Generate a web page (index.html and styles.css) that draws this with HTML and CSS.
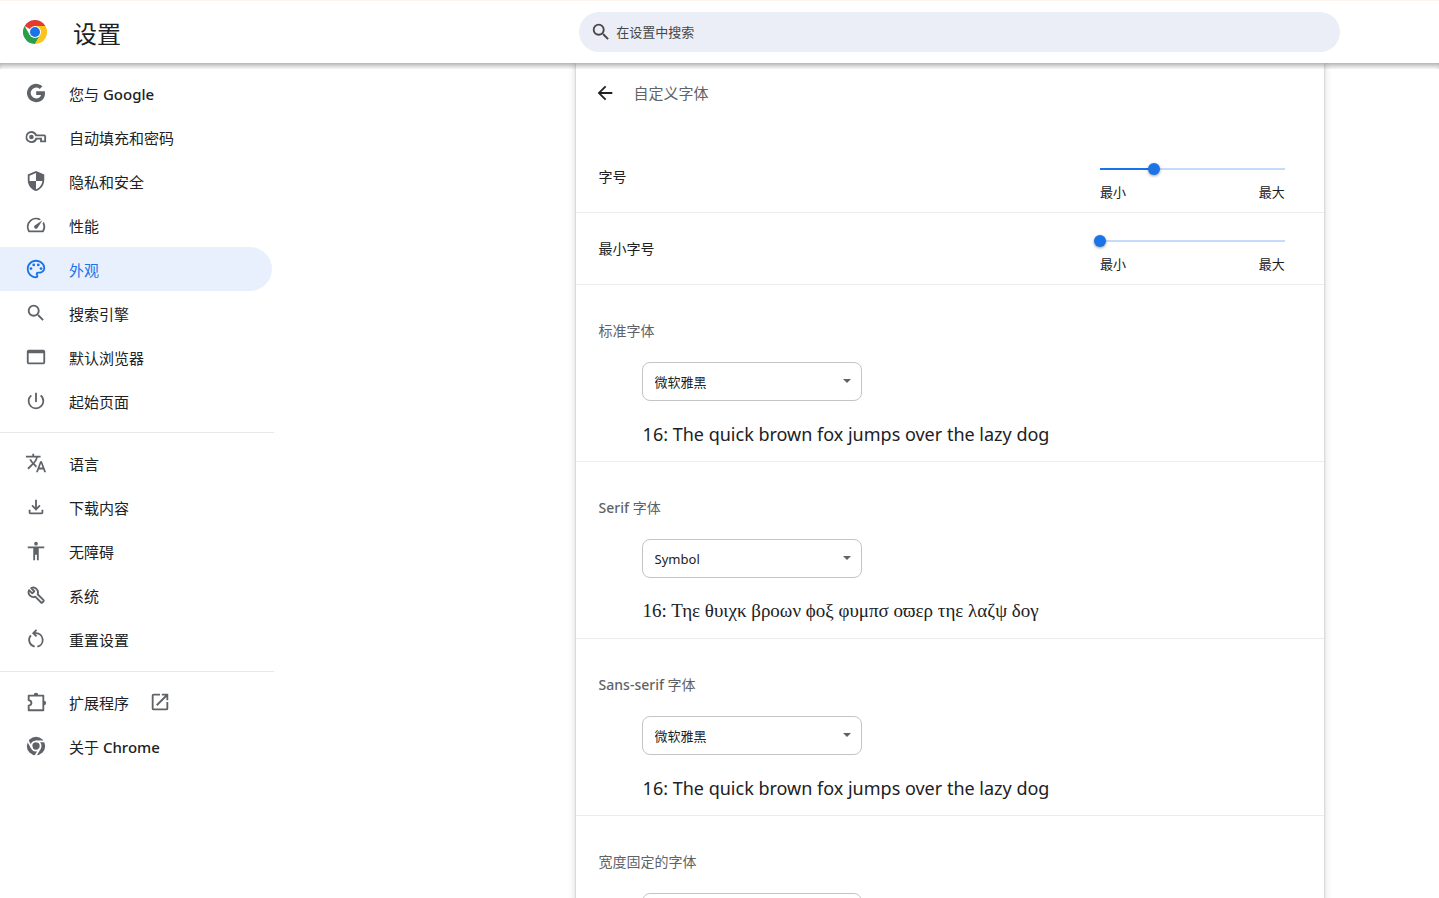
FILE: index.html
```html
<!DOCTYPE html>
<html lang="zh-CN">
<head>
<meta charset="utf-8">
<title>设置 - 自定义字体</title>
<meta name="viewport" content="width=device-width, initial-scale=1">
<link rel="stylesheet" href="styles.css">
</head>
<body>
<div class="app">
  <header class="toolbar">
    <div class="brand">
      <svg class="logo" viewBox="0 0 48 48" aria-hidden="true">
        <path fill="#e33b2e" d="M24 24 3.2 12A24 24 0 0 1 44.8 12L44.8 12.5 24 12.5Z"/>
        <path fill="#2a9d4a" d="M3.2 12A24 24 0 0 0 24 48L34.4 30 24 24 13.6 30Z"/>
        <path fill="#fcc31e" d="M24 12H44.8A24 24 0 0 1 24 48L34.4 30Z"/>
        <circle cx="24" cy="24" r="12" fill="#fff"/>
        <circle cx="24" cy="24" r="10" fill="#1a73e8"/>
      </svg>
      <h1 class="brand-name">设置</h1>
    </div>
    <label class="search">
      <svg class="search-icon" viewBox="0 0 24 24" aria-hidden="true"><path d="M15.5 14h-.79l-.28-.27A6.471 6.471 0 0 0 16 9.5 6.5 6.5 0 1 0 9.5 16c1.61 0 3.09-.59 4.23-1.57l.27.28v.79l5 4.99L20.49 19l-4.99-5zm-6 0C7.01 14 5 11.99 5 9.5S7.01 5 9.5 5 14 7.01 14 9.5 11.99 14 9.5 14z"/></svg>
      <input class="search-input" type="search" placeholder="在设置中搜索" aria-label="在设置中搜索">
    </label>
  </header>

  <div class="page">
    <nav class="menu" aria-label="设置">
      <a class="item" href="#people"><svg class="icon" viewBox="0 0 24 24"><path d="M21.600 10.2H12.2v4h5.300c-.6 2.200-2.500 3.700-5.300 3.700a5.900 5.900 0 1 1 3.900-10.300l2.900-2.900A10 10 0 1 0 12.200 22c5.700 0 9.600-4 9.600-9.800 0-.7-.1-1.400-.2-2z"/></svg><span>您与 <b>Google</b></span></a>
      <a class="item" href="#autofill"><svg class="icon" viewBox="0 0 24 24"><path fill-rule="evenodd" d="M7 5.500c2.600 0 4.800 1.500 5.800 3.700H21.500l1.500 1.500v7h-6.500v-3h-3.400A6.500 6.500 0 1 1 7 5.500zm0 2a4.500 4.500 0 1 0 4.300 5.900l.2-.7h7v3H21v-4.500H11.500l-.3-.7A4.500 4.500 0 0 0 7 7.500zM7 9.500a2.500 2.500 0 1 1 0 5 2.500 2.500 0 0 1 0-5z"/></svg><span>自动填充和密码</span></a>
      <a class="item" href="#privacy"><svg class="icon" viewBox="0 0 24 24"><path d="M12 1 3 5v6c0 5.550 3.840 10.740 9 12 5.160-1.260 9-6.450 9-12V5l-9-4zm0 10.990h7c-.53 4.120-3.280 7.790-7 8.940V12H5V6.300l7-3.110v8.800z"/></svg><span>隐私和安全</span></a>
      <a class="item" href="#performance"><svg class="icon" viewBox="0 0 24 24"><path d="m20.380 8.570-1.230 1.850a8 8 0 0 1-.22 7.580H5.070A8 8 0 0 1 15.580 6.850l1.850-1.230A10 10 0 0 0 3.350 19a2 2 0 0 0 1.720 1h13.850a2 2 0 0 0 1.740-1 10 10 0 0 0-.27-10.440zm-9.790 6.840a2 2 0 0 0 2.830 0l5.660-8.490-8.490 5.660a2 2 0 0 0 0 2.830z"/></svg><span>性能</span></a>
      <a class="item item-active" href="#appearance" aria-current="page"><svg class="icon" viewBox="0 0 24 24"><path d="M12 22C6.490 22 2 17.510 2 12S6.490 2 12 2s10 4.040 10 9c0 3.310-2.690 6-6 6h-1.770c-.28 0-.5.220-.5.500 0 .12.050.23.130.33.410.47.640 1.060.640 1.670A2.500 2.500 0 0 1 12 22zm0-18c-4.410 0-8 3.590-8 8s3.590 8 8 8c.28 0 .5-.22.5-.5a.540.540 0 0 0-.14-.35c-.41-.46-.63-1.050-.63-1.650a2.500 2.500 0 0 1 2.500-2.500H16c2.210 0 4-1.790 4-4 0-3.860-3.590-7-8-7z"/><circle cx="6.500" cy="11.500" r="1.500"/><circle cx="9.500" cy="7.500" r="1.500"/><circle cx="14.500" cy="7.500" r="1.500"/><circle cx="17.500" cy="11.500" r="1.500"/></svg><span>外观</span></a>
      <a class="item" href="#search"><svg class="icon" viewBox="0 0 24 24"><path d="M15.500 14h-.79l-.28-.27A6.471 6.471 0 0 0 16 9.500 6.500 6.500 0 1 0 9.500 16c1.610 0 3.090-.59 4.230-1.570l.27.28v.79l5 4.990L20.490 19l-4.990-5zm-6 0C7.010 14 5 11.990 5 9.500S7.010 5 9.500 5 14 7.010 14 9.500 11.990 14 9.500 14z"/></svg><span>搜索引擎</span></a>
      <a class="item" href="#default-browser"><svg class="icon" viewBox="0 0 24 24"><path d="M20 4H4a2 2 0 0 0-2 2v12a2 2 0 0 0 2 2h16a2 2 0 0 0 2-2V6a2 2 0 0 0-2-2zm0 14H4V8h16v10z"/></svg><span>默认浏览器</span></a>
      <a class="item" href="#on-startup"><svg class="icon" viewBox="0 0 24 24"><path d="M13 3h-2v10h2V3zm4.830 2.170-1.420 1.420A6.920 6.920 0 0 1 19 12c0 3.870-3.130 7-7 7A6.995 6.995 0 0 1 7.580 6.580L6.170 5.170A8.932 8.932 0 0 0 3 12a9 9 0 0 0 18 0c0-2.740-1.230-5.180-3.170-6.830z"/></svg><span>起始页面</span></a>
      <hr class="divider">
      <a class="item" href="#languages"><svg class="icon" viewBox="0 0 24 24"><path d="m12.870 15.070-2.540-2.510.03-.03A17.520 17.520 0 0 0 14.070 6H17V4h-7V2H8v2H1v1.990h11.170C11.500 7.920 10.440 9.750 9 11.350 8.070 10.320 7.300 9.190 6.690 8h-2c.73 1.630 1.730 3.170 2.980 4.560l-5.090 5.020L4 19l5-5 3.110 3.110.76-2.040zM18.500 10h-2L12 22h2l1.120-3h4.750L21 22h2l-4.500-12zm-2.620 7 1.620-4.330L19.120 17h-3.240z"/></svg><span>语言</span></a>
      <a class="item" href="#downloads"><svg class="icon" viewBox="0 0 24 24"><path d="m12 16-5-5 1.400-1.450 2.600 2.600V4h2v8.150l2.600-2.600L17 11l-5 5zm-6 4a2 2 0 0 1-2-2v-3h2v3h12v-3h2v3a2 2 0 0 1-2 2H6z"/></svg><span>下载内容</span></a>
      <a class="item" href="#accessibility"><svg class="icon" viewBox="0 0 24 24"><path d="M12 2a2 2 0 1 1 0 4 2 2 0 0 1 0-4zm9 7h-6v13h-2v-6h-2v6H9V9H3V7h18v2z"/></svg><span>无障碍</span></a>
      <a class="item" href="#system"><svg class="icon" viewBox="0 0 24 24"><path fill="none" stroke="currentColor" stroke-width="2" stroke-linejoin="round" d="m13.800 11.200 6.400 6.400c.4.400.4.900 0 1.300l-1.300 1.300c-.4.400-.9.400-1.300 0l-6.400-6.400c-2 .8-4.300.4-5.800-1.100C3.800 11.100 3.500 8.700 4.400 6.700l3.500 3.500 2.300-2.300-3.500-3.500c2-.9 4.400-.5 6 1.100 1.500 1.500 1.900 3.700 1.100 5.700z"/></svg><span>系统</span></a>
      <a class="item" href="#reset"><svg class="icon" viewBox="0 0 24 24"><path fill="none" stroke="currentColor" stroke-width="2" d="M10.500 20.400A7.500 7.500 0 0 1 6.500 8M13.500 20.400A7.500 7.500 0 0 0 12 5.600H9.500M12.600 2 9 5.600l3.600 3.600"/></svg><span>重置设置</span></a>
      <hr class="divider">
      <a class="item" href="#extensions"><svg class="icon" viewBox="0 0 24 24"><path fill="none" stroke="currentColor" stroke-width="2" stroke-linejoin="round" d="M4 5h16v16H4v-5c4-1 4-5 0-6z"/><path d="M9.500 4.500a2.500 2.500 0 0 1 5 0zM20.500 10.500a2.500 2.500 0 0 1 0 5z"/></svg><span>扩展程序</span><svg class="icon" viewBox="0 0 24 24"><path d="M19 19H5V5h7V3H5a2 2 0 0 0-2 2v14a2 2 0 0 0 2 2h14a2 2 0 0 0 2-2v-7h-2v7zM14 3v2h3.590l-9.830 9.830 1.410 1.410L19 6.410V10h2V3h-7z"/></svg></a>
      <a class="item" href="#help"><svg class="icon" viewBox="0 0 24 24"><circle cx="12" cy="12" r="10"/><circle cx="12" cy="12" r="5" fill="none" stroke="#fff" stroke-width="2"/><path fill="none" stroke="#fff" stroke-width="2" d="M12 7h9.500M7.700 14.500 3 6.300M16.300 14.500 11.500 22.700"/></svg><span>关于 <b>Chrome</b></span></a>
    </nav>

    <main class="card">
      <div class="card-head">
        <button class="back" type="button" aria-label="返回"><svg class="back-icon" viewBox="0 0 24 24"><path d="M20 11H7.830l5.590-5.590L12 4l-8 8 8 8 1.410-1.410L7.830 13H20v-2z"/></svg></button>
        <h2 class="card-title">自定义字体</h2>
      </div>

      <div class="row">
        <label for="size">字号</label>
        <div class="slider">
          <input class="range" id="size" type="range" min="0" max="24" value="7" style="--fill: 0.29">
          <div class="ends"><span>最小</span><span>最大</span></div>
        </div>
      </div>
      <div class="row">
        <label for="min-size">最小字号</label>
        <div class="slider">
          <input class="range" id="min-size" type="range" min="0" max="24" value="0" style="--fill: 0">
          <div class="ends"><span>最小</span><span>最大</span></div>
        </div>
      </div>

      <section class="font">
        <label class="font-label" for="standard">标准字体</label>
        <div class="picker"><select class="select" id="standard"><option>微软雅黑</option></select></div>
        <p class="sample">16: The quick brown fox jumps over the lazy dog</p>
      </section>
      <section class="font">
        <label class="font-label" for="serif"><b>Serif</b> 字体</label>
        <div class="picker"><select class="select" id="serif"><option>Symbol</option></select></div>
        <p class="sample sample-symbol">16: Τηε θυιχκ βροων ϕοξ φυμπσ οϖερ τηε λαζψ δογ</p>
      </section>
      <section class="font">
        <label class="font-label" for="sans"><b>Sans-serif</b> 字体</label>
        <div class="picker"><select class="select" id="sans"><option>微软雅黑</option></select></div>
        <p class="sample">16: The quick brown fox jumps over the lazy dog</p>
      </section>
      <section class="font">
        <label class="font-label" for="fixed">宽度固定的字体</label>
        <div class="picker"><select class="select" id="fixed"><option></option></select></div>
      </section>
    </main>
  </div>
</div>
</body>
</html>
```
FILE: styles.css
```css
* {
  box-sizing: border-box;
}

body {
  margin: 0;
  background: #fff;
  color: #202124;
  font: 14px/22px "Noto Sans", "Noto Sans CJK SC", sans-serif;
}

b {
  font-weight: 500;
}

svg {
  display: block;
  flex: none;
  fill: currentColor;
}

.app {
  display: flex;
  flex-direction: column;
  height: 100vh;
}

/* Toolbar */
.toolbar {
  position: relative;
  z-index: 1;
  display: grid;
  grid-template-columns: 4025fr 5285fr 690fr;
  align-items: center;
  height: 63px;
  flex: none;
  background: #fff;
  border-top: 1px solid #fff3f0;
}

.toolbar::after {
  content: "";
  position: absolute;
  top: 100%;
  left: 0;
  right: 0;
  height: 6px;
  box-shadow: inset 0 5px 6px -3px rgba(0, 0, 0, 0.4);
  pointer-events: none;
}

.brand {
  display: flex;
  align-items: center;
  gap: 26px;
  padding-left: 23px;
}

.logo {
  width: 24px;
  height: 24px;
}

.brand-name {
  margin: 0;
  padding-top: 3px;
  font-size: 24px;
  line-height: 32px;
  font-weight: 400;
}

.search {
  display: flex;
  align-items: center;
  gap: 4px;
  height: 40px;
  padding: 0 11px;
  border-radius: 20px;
  background: #ebeef7;
  color: #474747;
}

.search-icon {
  width: 22px;
  height: 22px;
}

.search-input {
  flex: 1;
  min-width: 0;
  padding: 0;
  border: 0;
  outline: 0;
  background: none;
  color: inherit;
  font: inherit;
  font-size: 13px;
}

.search-input::placeholder {
  color: #474747;
}

/* Page columns */
.page {
  display: grid;
  grid-template-columns: 40fr 52fr 8fr;
  flex: 1;
  min-height: 0;
  overflow: auto;
  scrollbar-width: none;
}

.menu {
  width: 274px;
  padding-top: 8px;
}

.item {
  display: flex;
  align-items: center;
  gap: 22px;
  height: 44px;
  margin-right: 2px;
  padding-left: 25px;
  border-radius: 0 22px 22px 0;
  color: #202124;
  font-size: 15px;
  text-decoration: none;
}

.item span {
  padding-top: 2px;
}

.icon {
  width: 22px;
  height: 22px;
  color: #5f6368;
}

.item span + .icon {
  margin-left: -2px;
}

.item-active {
  background: #e8f0fe;
}

.item-active,
.item-active .icon {
  color: #1a73e8;
}

.divider {
  height: 1px;
  margin: 9px 0 8px;
  border: 0;
  background: #e8e8e8;
}

.divider ~ .divider {
  margin-top: 10px;
}

/* Card */
.card {
  min-width: 0;
  height: max-content;
  background: #fff;
  box-shadow: 0 1px 2px rgba(60, 64, 67, 0.3), 0 2px 6px 2px rgba(60, 64, 67, 0.15);
}

.card-head {
  display: flex;
  align-items: center;
  gap: 18px;
  padding: 8px 18px 26px;
}

.back {
  display: grid;
  place-items: center;
  height: 44px;
  padding: 0;
  border: 0;
  background: none;
  color: #202124;
}

.back-icon {
  width: 22px;
  height: 22px;
}

.card-title {
  margin: 0;
  font-size: 15px;
  font-weight: 400;
  color: #5f6368;
}

.row {
  display: flex;
  align-items: center;
  justify-content: space-between;
  height: 72px;
  padding: 0 39px 0 23px;
  border-bottom: 1px solid #ececec;
}

.slider {
  width: 185px;
  padding-top: 10px;
}

.range {
  --track: calc(100% - 12px);
  display: block;
  width: calc(100% + 12px);
  height: 12px;
  margin: 0 -6px 8px;
  appearance: none;
  background:
    linear-gradient(#1a73e8, #1a73e8) 6px center / calc(var(--track) * var(--fill)) 2px no-repeat,
    linear-gradient(#c6dafc, #c6dafc) center / var(--track) 2px no-repeat;
}

.range::-webkit-slider-thumb {
  appearance: none;
  width: 12px;
  height: 12px;
  border-radius: 50%;
  background: #1a73e8;
  box-shadow: 0 1px 3px rgba(0, 0, 0, 0.4);
}

.ends {
  display: flex;
  justify-content: space-between;
  font-size: 13px;
  line-height: 18px;
}

.font {
  padding: 35px 23px 15px;
  border-bottom: 1px solid #ececec;
}

.font-label {
  display: block;
  color: #5f6368;
}

.picker {
  position: relative;
  width: 220px;
  margin: 20px 43px 21px;
}

.picker::after {
  content: "";
  position: absolute;
  top: 17px;
  right: 11px;
  border: 4px solid transparent;
  border-top-color: #5f6368;
  border-bottom: 0;
  pointer-events: none;
}

.select {
  display: block;
  width: 100%;
  height: 39px;
  padding: 1px 30px 0 12px;
  appearance: none;
  border: 1px solid #c4c4c4;
  border-radius: 8px;
  background: #fff;
  color: #202124;
  font: inherit;
  font-size: 13px;
}

.sample {
  margin: 0 44px;
  font-size: 18px;
  line-height: 24px;
}

.sample-symbol {
  font-family: "Liberation Serif", serif;
  font-size: 19px;
}
```
